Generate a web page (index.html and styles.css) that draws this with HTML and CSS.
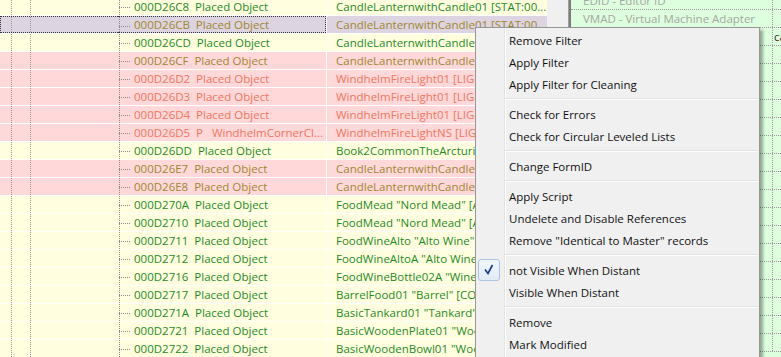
FILE: index.html
```html
<!DOCTYPE html>
<html lang="en">
<head>
  <meta charset="UTF-8" />
  <title>Records - context menu</title>
  <link rel="stylesheet" href="styles.css">
</head>
<body>

<div class="window">

  <div class="tree">
    <div class="row ok"><div class="g"><span></span><span></span></div><div class="c1"><span class="branch"></span>000D26C8&nbsp; Placed Object</div><div class="c2">CandleLanternwithCandle01 [STAT:00...</div></div>
    <div class="row sel"><div class="g"><span></span><span></span></div><div class="c1"><span class="branch"></span>000D26CB&nbsp; Placed Object</div><div class="c2">CandleLanternwithCandle01 [STAT:00...</div></div>
    <div class="row ok"><div class="g"><span></span><span></span></div><div class="c1"><span class="branch"></span>000D26CD&nbsp; Placed Object</div><div class="c2">CandleLanternwithCandle01 [STAT:00...</div></div>
    <div class="row warn"><div class="g"><span></span><span></span></div><div class="c1"><span class="branch"></span>000D26CF&nbsp; Placed Object</div><div class="c2">CandleLanternwithCandle01 [STAT:00...</div></div>
    <div class="row bad"><div class="g"><span></span><span></span></div><div class="c1"><span class="branch"></span>000D26D2&nbsp; Placed Object</div><div class="c2">WindhelmFireLight01 [LIGH:00...</div></div>
    <div class="row bad"><div class="g"><span></span><span></span></div><div class="c1"><span class="branch"></span>000D26D3&nbsp; Placed Object</div><div class="c2">WindhelmFireLight01 [LIGH:00...</div></div>
    <div class="row bad"><div class="g"><span></span><span></span></div><div class="c1"><span class="branch"></span>000D26D4&nbsp; Placed Object</div><div class="c2">WindhelmFireLight01 [LIGH:00...</div></div>
    <div class="row bad"><div class="g"><span></span><span></span></div><div class="c1"><span class="branch"></span>000D26D5&nbsp; P&nbsp;&nbsp; WindhelmCornerCl...</div><div class="c2">WindhelmFireLightNS [LIGH:00...</div></div>
    <div class="row ok"><div class="g"><span></span><span></span></div><div class="c1"><span class="branch"></span>000D26DD&nbsp; Placed Object</div><div class="c2">Book2CommonTheArcturianHeresy...</div></div>
    <div class="row warn"><div class="g"><span></span><span></span></div><div class="c1"><span class="branch"></span>000D26E7&nbsp; Placed Object</div><div class="c2">CandleLanternwithCandle01 [STAT:00...</div></div>
    <div class="row warn"><div class="g"><span></span><span></span></div><div class="c1"><span class="branch"></span>000D26E8&nbsp; Placed Object</div><div class="c2">CandleLanternwithCandle01 [STAT:00...</div></div>
    <div class="row ok"><div class="g"><span></span><span></span></div><div class="c1"><span class="branch"></span>000D270A&nbsp; Placed Object</div><div class="c2">FoodMead "Nord Mead" [ALCH:00...</div></div>
    <div class="row ok"><div class="g"><span></span><span></span></div><div class="c1"><span class="branch"></span>000D2710&nbsp; Placed Object</div><div class="c2">FoodMead "Nord Mead" [ALCH:00...</div></div>
    <div class="row ok"><div class="g"><span></span><span></span></div><div class="c1"><span class="branch"></span>000D2711&nbsp; Placed Object</div><div class="c2">FoodWineAlto "Alto Wine" [ALCH...</div></div>
    <div class="row ok"><div class="g"><span></span><span></span></div><div class="c1"><span class="branch"></span>000D2712&nbsp; Placed Object</div><div class="c2">FoodWineAltoA "Alto Wine" [ALCH...</div></div>
    <div class="row ok"><div class="g"><span></span><span></span></div><div class="c1"><span class="branch"></span>000D2716&nbsp; Placed Object</div><div class="c2">FoodWineBottle02A "Wine" [ALCH...</div></div>
    <div class="row ok"><div class="g"><span></span><span></span></div><div class="c1"><span class="branch"></span>000D2717&nbsp; Placed Object</div><div class="c2">BarrelFood01 "Barrel" [CONT:00...</div></div>
    <div class="row ok"><div class="g"><span></span><span></span></div><div class="c1"><span class="branch"></span>000D271A&nbsp; Placed Object</div><div class="c2">BasicTankard01 "Tankard" [MISC...</div></div>
    <div class="row ok"><div class="g"><span></span><span></span></div><div class="c1"><span class="branch"></span>000D2721&nbsp; Placed Object</div><div class="c2">BasicWoodenPlate01 "Wooden Plate"</div></div>
    <div class="row ok"><div class="g"><span></span><span></span></div><div class="c1"><span class="branch"></span>000D2722&nbsp; Placed Object</div><div class="c2">BasicWoodenBowl01 "Wooden Bowl"</div></div>
  </div>

  <div class="split"></div>

  <div class="view">
    <div class="vrow"><div class="k">EDID - Editor ID</div><div class="v"></div></div>
    <div class="vrow"><div class="k">VMAD - Virtual Machine Adapter</div><div class="v"></div></div>
    <div class="vrow"><div class="k"></div><div class="v">cand</div></div>
    <div class="vrow"><div class="k"></div><div class="v"></div></div>
    <div class="vrow"><div class="k"></div><div class="v"></div></div>
    <div class="vrow"><div class="k"></div><div class="v"></div></div>
    <div class="vrow"><div class="k"></div><div class="v"></div></div>
    <div class="vrow"><div class="k"></div><div class="v"></div></div>
    <div class="vrow"><div class="k"></div><div class="v"></div></div>
    <div class="vrow"><div class="k"></div><div class="v"></div></div>
    <div class="vrow"><div class="k"></div><div class="v"></div></div>
    <div class="vrow"><div class="k"></div><div class="v"></div></div>
    <div class="vrow"><div class="k"></div><div class="v"></div></div>
    <div class="vrow"><div class="k"></div><div class="v"></div></div>
    <div class="vrow"><div class="k"></div><div class="v"></div></div>
    <div class="vrow"><div class="k"></div><div class="v"></div></div>
    <div class="vrow"><div class="k"></div><div class="v"></div></div>
    <div class="vrow"><div class="k"></div><div class="v"></div></div>
    <div class="vrow"><div class="k"></div><div class="v"></div></div>
    <div class="vrow"><div class="k"></div><div class="v"></div></div>
  </div>

  <div class="menu">
    <div class="item"><span class="ico"></span>Remove Filter</div>
    <div class="item"><span class="ico"></span>Apply Filter</div>
    <div class="item"><span class="ico"></span>Apply Filter for Cleaning</div>
    <div class="sep"></div>
    <div class="item"><span class="ico"></span>Check for Errors</div>
    <div class="item"><span class="ico"></span>Check for Circular Leveled Lists</div>
    <div class="sep"></div>
    <div class="item"><span class="ico"></span>Change FormID</div>
    <div class="sep"></div>
    <div class="item"><span class="ico"></span>Apply Script</div>
    <div class="item"><span class="ico"></span>Undelete and Disable References</div>
    <div class="item"><span class="ico"></span>Remove "Identical to Master" records</div>
    <div class="sep"></div>
    <div class="item"><span class="ico checked"><svg width="20" height="20" viewBox="0 0 20 20"><path d="M6 9.5 L9 13.5 L13.5 5" fill="none" stroke="#1c3c8c" stroke-width="1.7"/></svg></span>not Visible When Distant</div>
    <div class="item"><span class="ico"></span>Visible When Distant</div>
    <div class="sep"></div>
    <div class="item"><span class="ico"></span>Remove</div>
    <div class="item"><span class="ico"></span>Mark Modified</div>
  </div>

</div>

</body>
</html>
```

FILE: styles.css
```css
body {
  margin: 0;
  overflow: hidden;
  font-family: "Open Sans", "Noto Sans", sans-serif;
  font-size: 11.5px;
  background: #f0f0f0;
}
.window {
  position: relative;
  display: flex;
  height: 357px;
  overflow: hidden;
}

/* record tree */
.tree {
  width: 547px;
  margin-top: -2px;
  flex-shrink: 0;
}
.row {
  display: grid;
  grid-template-columns: 118px 208px 1fr;
  height: 17px;
  line-height: 17px;
  border-bottom: 1px solid #fff;
  white-space: nowrap;
}
.row.ok { background: #ffffe0; color: #1f8a1f; }
.row.warn { background: #ffd8da; color: #a2862f; }
.row.bad { background: #ffd8da; color: #f2765a; }
.row.sel { background: #ddd4e1; color: #a2862f; }
.g {
  display: flex;
  padding-left: 11px;
}
.g span {
  width: 18px;
  border-left: 1px dotted #9a9a9a;
}
.c1 {
  display: flex;
  align-items: center;
  padding-left: 1px;
  overflow: hidden;
}
.branch {
  align-self: stretch;
  width: 10px;
  margin-right: 4px;
  border-left: 1px dotted #8a8a8a;
  background-image: linear-gradient(to right, #8a8a8a 50%, transparent 50%);
  background-size: 2px 1px;
  background-repeat: repeat-x;
  background-position: 1px 9px;
}
.c2 {
  border-left: 1px solid #fff;
  padding-left: 9px;
  overflow: hidden;
}
.row.sel .g {
  border: 1px dotted #333;
  border-right: none;
  padding-left: 10px;
}
.row.sel .c1 {
  border: 1px dotted #333;
  border-left: none;
  line-height: 15px;
}
.row.sel .g,
.row.sel .c1 {
  box-sizing: border-box;
  height: 17px;
}

/* splitter */
.split {
  width: 21px;
  flex-shrink: 0;
  background: #f0f0f0;
  border-right: 1px solid #a0a0a0;
}

/* element view */
.view {
  flex: 1;
  background: #ddffdd;
  border-left: 2px solid #7c7c7c;
  color: #a6a6a6;
  white-space: nowrap;
  overflow: hidden;
}
.vrow {
  display: grid;
  grid-template-columns: 202px 1fr;
  height: 17px;
  line-height: 17px;
  border-bottom: 1px dotted #9a9a9a;
}
.vrow:first-child {
  margin-top: -8px;
}
.k {
  padding-left: 12px;
  border-right: 1px dotted #9a9a9a;
  overflow: hidden;
}
.v {
  padding-left: 1px;
  color: #333;
  overflow: hidden;
}

/* context menu */
.menu {
  position: absolute;
  left: 475px;
  top: 27px;
  width: 283px;
  height: 340px;
  padding-top: 1px;
  background-color: #f0f0f0;
  background-image: linear-gradient(to right, transparent 28px, #e2e3e3 28px, #e2e3e3 29px, #fff 29px, #fff 30px, transparent 30px);
  border: 1px solid #979797;
  box-shadow: 3px 3px 3px rgba(0, 0, 0, 0.35);
  color: #111;
}
.item {
  display: flex;
  align-items: center;
  height: 22px;
  padding-left: 2px;
  white-space: nowrap;
}
.ico {
  width: 22px;
  height: 22px;
  margin-right: 9px;
  box-sizing: border-box;
}
.ico.checked {
  display: flex;
  align-items: center;
  justify-content: center;
  border: 1px solid #a9c3e5;
  border-radius: 3px;
  background: linear-gradient(#f1f6fd, #e2ebf8);
}
.sep {
  margin: 3px 1px 3px 29px;
  border-top: 1px solid #e0e0e0;
  border-bottom: 1px solid #fff;
}
```
